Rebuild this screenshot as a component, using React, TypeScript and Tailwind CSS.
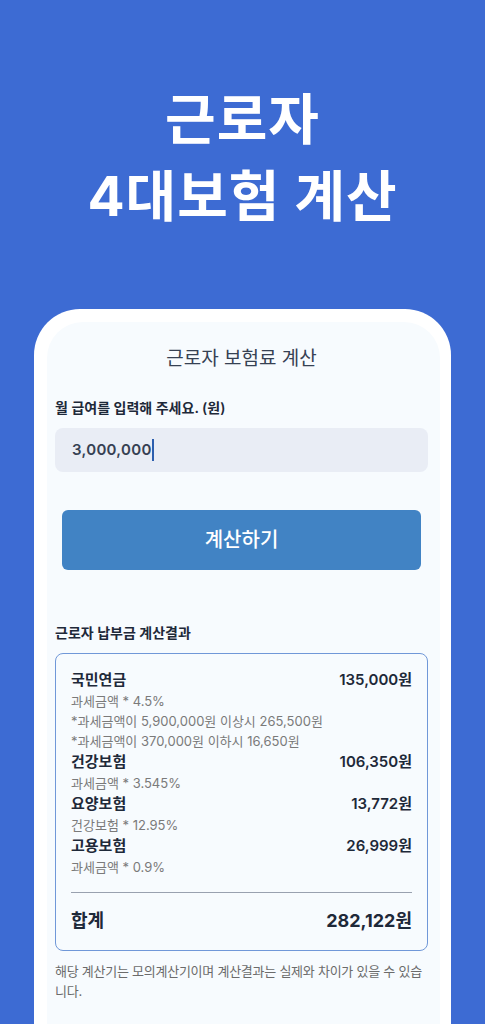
import React from 'react'

const font = "font-['Inter','Noto_Sans_CJK_KR',sans-serif]"

const items = [
    { name: '국민연금', value: '135,000원', notes: ['과세금액 * 4.5%', '*과세금액이 5,900,000원 이상시 265,500원', '*과세금액이 370,000원 이하시 16,650원'] },
    { name: '건강보험', value: '106,350원', notes: ['과세금액 * 3.545%'] },
    { name: '요양보험', value: '13,772원', notes: ['건강보험 * 12.95%'] },
    { name: '고용보험', value: '26,999원', notes: ['과세금액 * 0.9%'] },
]

const App = () => {
    return (
        <div className={`h-[1024px] overflow-hidden bg-[#3d6bd3] flex flex-col ${font}`}>
            <h1 className="pt-[81px] text-white text-[55px] font-bold leading-[77px] tracking-[1px] text-center">
                근로자
                <br />
                4대보험 계산
            </h1>
            <div className="mt-[74px] ml-[34px] w-[417px] flex-1 bg-white rounded-t-[46px] pl-[13px] pr-[11px] pt-[13px]">
                <div className="h-full bg-[#f7fbfe] rounded-t-[36px] pl-[8px] pr-[12px] pt-[23px]">
                    <h2 className="text-center text-[19px] leading-[28px] text-gray-700">근로자 보험료 계산</h2>

                    <p className="mt-[25px] text-[14px] leading-[20px] font-semibold text-gray-800">월 급여를 입력해 주세요. (원)</p>
                    <div className="mt-[10px] h-[44px] rounded-lg bg-[#e9edf5] flex items-center px-[17px]">
                        <span className="text-[15px] font-semibold text-gray-700 tracking-[0.3px]">3,000,000</span>
                        <span className="w-[2px] h-[22px] bg-[#2d5fae]" />
                    </div>

                    <div className="px-[7px] mt-[38px]">
                        <button className="w-full h-[60px] rounded-md bg-[#4183c4] text-white text-[20px] font-medium">
                            계산하기
                        </button>
                    </div>

                    <p className="mt-[53px] text-[14px] leading-[20px] font-semibold text-gray-800">근로자 납부금 계산결과</p>
                    <div className="mt-[10px] rounded-lg border border-[#7098d8] px-[15px] pt-[15px] pb-[15px]">
                        {items.map((it) => (
                            <div key={it.name}>
                                <div className="flex justify-between text-[15px] leading-[22px] font-semibold text-gray-800">
                                    <span>{it.name}</span>
                                    <span>{it.value}</span>
                                </div>
                                {it.notes.map((n) => (
                                    <p key={n} className="text-[13px] leading-[20px] text-[#7a7a7a]">{n}</p>
                                ))}
                            </div>
                        ))}
                        <div className="mt-[15px] border-t border-gray-400" />
                        <div className="mt-[14px] flex justify-between text-[18px] leading-[28px] font-bold text-gray-800">
                            <span>합계</span>
                            <span>282,122원</span>
                        </div>
                    </div>
                    <p className="mt-[10px] text-[13px] leading-[20px] tracking-[-0.25px] break-all text-[#6b6b6b]">
                        해당 계산기는 모의계산기이며 계산결과는 실제와 차이가 있을 수 있습니다.
                    </p>
                </div>
            </div>
        </div>
    )
}

export default App
